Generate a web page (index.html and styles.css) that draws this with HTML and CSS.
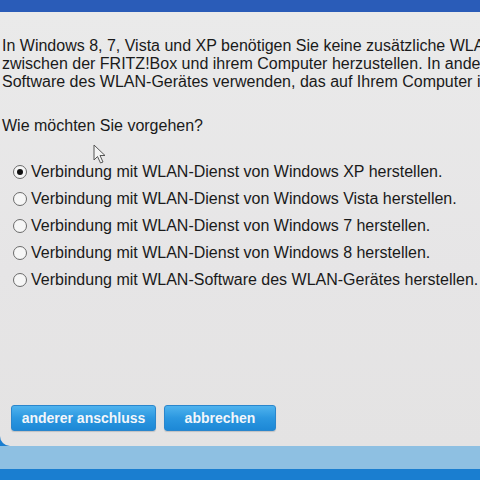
FILE: index.html
```html
<!DOCTYPE html>
<html lang="de">
<head>
<meta charset="utf-8">
<link rel="stylesheet" href="styles.css">
</head>
<body>
<div class="topbar"></div>
<div class="panel">
  <p class="intro">In Windows 8, 7, Vista und XP benötigen Sie keine zusätzliche WLAN-Software, um eine Verbindung<br>zwischen der FRITZ!Box und ihrem Computer herzustellen. In anderen Fällen können Sie die<br>Software des WLAN-Gerätes verwenden, das auf Ihrem Computer installiert ist.</p>
  <p class="question">Wie möchten Sie vorgehen?</p>
  <div class="options">
    <label class="opt"><span class="radio checked"></span>Verbindung mit WLAN-Dienst von Windows XP herstellen.</label>
    <label class="opt"><span class="radio"></span>Verbindung mit WLAN-Dienst von Windows Vista herstellen.</label>
    <label class="opt"><span class="radio"></span>Verbindung mit WLAN-Dienst von Windows 7 herstellen.</label>
    <label class="opt"><span class="radio"></span>Verbindung mit WLAN-Dienst von Windows 8 herstellen.</label>
    <label class="opt"><span class="radio"></span>Verbindung mit WLAN-Software des WLAN-Gerätes herstellen.</label>
  </div>
  <div class="buttons">
    <button class="btn wide">anderer anschluss</button>
    <button class="btn narrow">abbrechen</button>
  </div>
  <svg class="cursor" width="14" height="20" viewBox="0 0 14 20"><path d="M1 1 L1 16 L4.5 12.5 L7.5 19 L10 18 L7 11.5 L12 11.5 Z" fill="#f4f4f4" stroke="#555" stroke-width="1"/></svg>
</div>
<div class="band"></div>
<div class="bottombar"></div>
</body>
</html>
```

FILE: styles.css
```css
html, body {
  margin: 0;
  padding: 0;
  width: 480px;
  height: 480px;
  overflow: hidden;
  background: #1a7ed0;
  font-family: "Liberation Sans", Arial, sans-serif;
}
.topbar {
  height: 12px;
  background: #2a5cb8;
}
.panel {
  position: relative;
  height: 434px;
  background: linear-gradient(180deg, #eaeaea 0%, #e6e5e6 60%, #e4e3e3 100%);
  border-bottom-left-radius: 10px;
  color: #1a1a1a;
  overflow: hidden;
}
.intro {
  margin: 0;
  padding: 25px 0 0 2px;
  font-size: 16px;
  line-height: 18px;
  white-space: nowrap;
}
.question {
  margin: 26px 0 0 2px;
  font-size: 16px;
  line-height: 18px;
}
.options {
  margin-top: 28px;
  display: flex;
  flex-direction: column;
  gap: 9px;
}
.opt {
  display: flex;
  align-items: center;
  height: 18px;
  padding-left: 13px;
  font-size: 16px;
  white-space: nowrap;
}
.radio {
  width: 12px;
  height: 12px;
  border: 1px solid #6a6a6a;
  border-radius: 50%;
  background: #f6f6f6;
  margin-right: 4px;
  box-sizing: content-box;
  display: inline-flex;
  align-items: center;
  justify-content: center;
  flex: none;
}
.radio.checked::after {
  content: "";
  width: 6px;
  height: 6px;
  border-radius: 50%;
  background: #111;
}
.buttons {
  display: flex;
  gap: 8px;
  padding-left: 11px;
  margin-top: 116px;
}
.btn {
  height: 26px;
  border: 1px solid #2a86cc;
  border-radius: 3px;
  background: linear-gradient(180deg, #4fb3ee 0%, #2b97e0 50%, #1d88d6 100%);
  color: #f2f6fa;
  font-family: "Liberation Sans", Arial, sans-serif;
  font-weight: bold;
  font-size: 14px;
  padding: 0;
  box-shadow: 0 1px 1px rgba(0,0,0,0.15);
}
.btn.wide { width: 145px; }
.btn.narrow { width: 112px; }
.cursor {
  position: absolute;
  left: 93px;
  top: 132px;
}
.band {
  height: 23px;
  background: #8ec0e2;
}
.bottombar {
  height: 11px;
  background: #1a7ed0;
}
```
